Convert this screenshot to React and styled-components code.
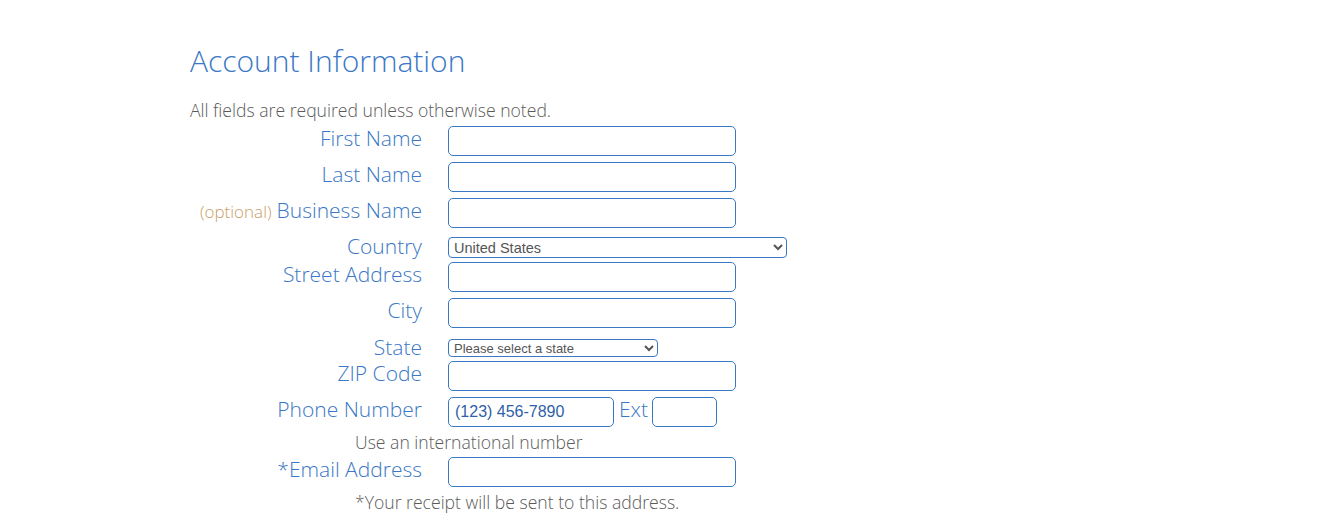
import React from 'react'
import styled, { createGlobalStyle } from 'styled-components'

const GlobalStyle = createGlobalStyle`
body {
    margin: 0;
    background: #ffffff;
    font-family: "Open Sans", "Liberation Sans", sans-serif;
}
`

const BLUE = '#3a77c6'
const BORDER = '#3b78c4'
const GRAY = '#5a5a5a'

const Page = styled.div`
padding: 40px 0 0 190px;
`

const Title = styled.h1`
margin: 0;
font-size: 30px;
font-weight: 300;
color: ${BLUE};
line-height: 41px;
`

const Intro = styled.p`
margin: 17px 0 0;
font-size: 17.6px;
font-weight: 300;
color: ${GRAY};
line-height: 25px;
`

const Form = styled.form`
margin-top: 3px;
display: flex;
flex-direction: column;
`

const Row = styled.div`
display: flex;
align-items: center;
height: ${p => p.$h || 30}px;
margin-top: ${p => p.$top ?? 6}px;
`

const Label = styled.label`
width: 232px;
margin-right: 26px;
text-align: right;
white-space: nowrap;
font-size: 21px;
font-weight: 300;
color: ${BLUE};
padding-bottom: ${p => p.$lift ?? 6}px;
`

const Optional = styled.span`
font-size: 17px;
color: #c9a06a;
margin-right: 5px;
`

const TextInput = styled.input`
box-sizing: border-box;
width: ${p => p.$w || 288}px;
height: 30px;
margin: 0;
padding: 0 6px;
border: 1px solid ${BORDER};
border-radius: 5px;
outline: none;
font-family: "Liberation Sans", Arial, sans-serif;
font-size: 16px;
color: #2f5fa6;
background: #fff;
&::placeholder {
    color: #2f5fa6;
    opacity: 1;
}
`

const Select = styled.select`
box-sizing: border-box;
width: ${p => p.$w}px;
height: ${p => p.$h}px;
margin: 1px 0 0;
padding: 0 1px;
border: 1px solid ${BORDER};
border-radius: 4px;
font-family: "Liberation Sans", Arial, sans-serif;
font-size: ${p => p.$fs}px;
color: #555;
background: #fff;
`

const Ext = styled.span`
margin: 0 4px 0 5px;
font-size: 21px;
font-weight: 300;
color: ${BLUE};
padding-bottom: 6px;
`

const Note = styled.div`
padding-left: 165px;
font-size: 17.6px;
font-weight: 300;
color: ${GRAY};
height: 30px;
line-height: 30px;
`

const Field = ({ label, optional, top }) => (
    <Row $top={top}>
        <Label>
            {optional && <Optional>(optional)</Optional>}
            {label}
        </Label>
        <TextInput type="text" />
    </Row>
)

export default function App() {
    return (
        <Page>
            <GlobalStyle />
            <Title>Account Information</Title>
            <Intro>All fields are required unless otherwise noted.</Intro>
            <Form onSubmit={e => e.preventDefault()}>
                <Field label="First Name" top={0} />
                <Field label="Last Name" />
                <Field label="Business Name" optional />
                <Row $h={26}>
                    <Label $lift={2}>Country</Label>
                    <Select $w={339} $h={21} $fs={14.5} defaultValue="US">
                        <option value="US">United States</option>
                        <option value="CA">Canada</option>
                    </Select>
                </Row>
                <Field label="Street Address" top={2} />
                <Field label="City" />
                <Row $h={26}>
                    <Label $lift={0}>State</Label>
                    <Select $w={210} $h={18} $fs={13} defaultValue="">
                        <option value="">Please select a state</option>
                        <option value="AL">Alabama</option>
                    </Select>
                </Row>
                <Field label="ZIP Code" top={1} />
                <Row>
                    <Label>Phone Number</Label>
                    <TextInput type="tel" $w={166} placeholder="(123) 456-7890" />
                    <Ext>Ext</Ext>
                    <TextInput type="text" $w={65} />
                </Row>
                <Note>Use an international number</Note>
                <Row $top={0}>
                    <Label>*Email Address</Label>
                    <TextInput type="email" />
                </Row>
                <Note>*Your receipt will be sent to this address.</Note>
            </Form>
        </Page>
    )
}
